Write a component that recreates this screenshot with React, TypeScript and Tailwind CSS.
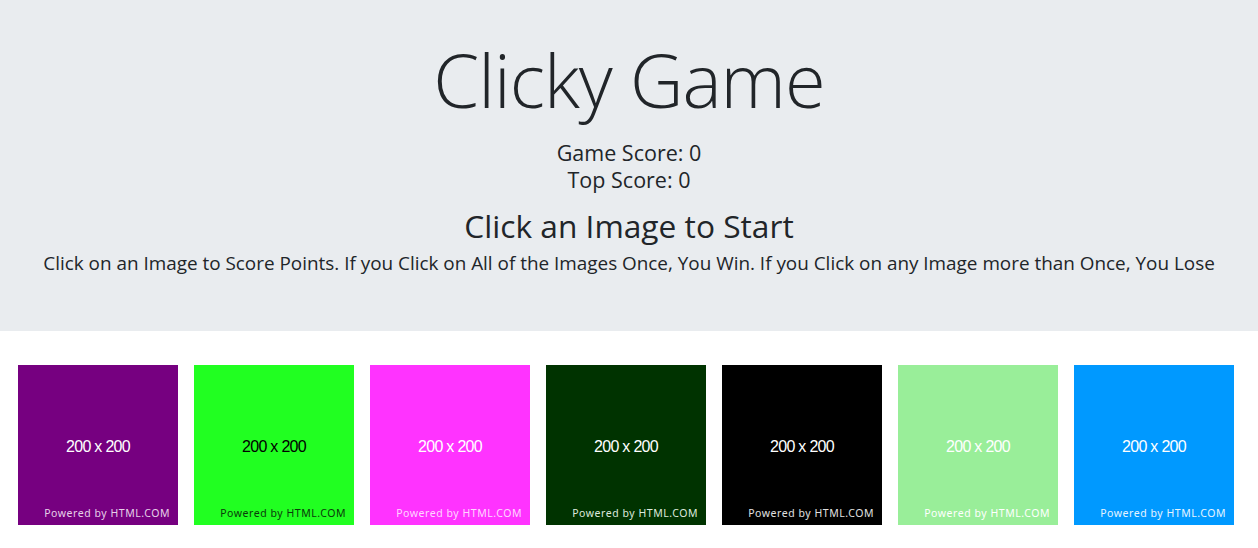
import React from "react";

const tiles = [
  { bg: "bg-[#760080]", fg: "text-white", pw: "text-[#e6d0e8]" },
  { bg: "bg-[#21ff21]", fg: "text-black", pw: "text-[#0a3a0a]" },
  { bg: "bg-[#ff33ff]", fg: "text-white", pw: "text-[#ffd6ff]" },
  { bg: "bg-[#003300]", fg: "text-white", pw: "text-[#dde8dd]" },
  { bg: "bg-black", fg: "text-white", pw: "text-[#e0e0e0]" },
  { bg: "bg-[#99ee99]", fg: "text-white", pw: "text-white" },
  { bg: "bg-[#0099ff]", fg: "text-white", pw: "text-[#e6f4ff]" },
];

export default function App() {
  return (
    <div className="min-h-[548px] bg-white" style={{ fontFamily: '"Open Sans", "Noto Sans", sans-serif' }}>
      <div className="bg-[#e9ecef] h-[331px] flex flex-col items-center pt-[32px] text-[#212529]">
        <h1 className="text-[74px] font-light leading-[96px] tracking-[-1px]">Clicky Game</h1>
        <div className="mt-[11px] text-[21.5px] leading-[27px] font-medium text-center">
          <div>Game Score: 0</div>
          <div>Top Score: 0</div>
        </div>
        <h2 className="mt-[14px] text-[31.7px] leading-[38px] font-medium">Click an Image to Start</h2>
        <p className="mt-[6px] text-[18.9px] leading-[24px] font-medium">
          Click on an Image to Score Points. If you Click on All of the Images Once, You Win. If you Click on any Image more than Once, You Lose
        </p>
      </div>
      <div className="flex gap-[16px] pl-[18px] pt-[34px]">
        {tiles.map((t, i) => (
          <div key={i} className={`relative w-[160px] h-[160px] ${t.bg} flex items-center justify-center`}>
            <span className={`${t.fg} text-[16px] tracking-[-0.7px] mt-[3px]`} style={{ fontFamily: '"Liberation Sans", Arial, sans-serif' }}>
              200 x 200
            </span>
            <span
              className={`absolute right-[8px] bottom-[3px] text-[10.5px] tracking-[0.55px] ${t.pw}`}
              style={{ fontFamily: '"Noto Sans", sans-serif' }}
            >
              Powered by HTML.COM
            </span>
          </div>
        ))}
      </div>
    </div>
  );
}
